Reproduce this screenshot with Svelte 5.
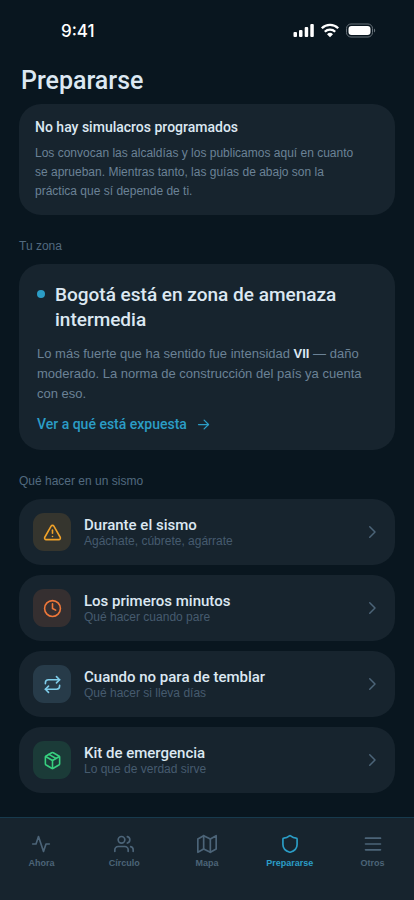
<script lang="ts">
  interface Guide {
    title: string;
    detail: string;
    icon: string;
    tone: string;
  }

  const icons: Record<string, string[]> = {
    alert: [
      'm21.73 18-8-14a2 2 0 0 0-3.48 0l-8 14A2 2 0 0 0 4 21h16a2 2 0 0 0 1.73-3',
      'M12 9v4',
      'M12 17h.01'
    ],
    clock: ['M12 2a10 10 0 1 0 0 20a10 10 0 1 0 0-20', 'M12 6v6l4 2'],
    repeat: ['m17 2 4 4-4 4', 'M3 11v-1a4 4 0 0 1 4-4h14', 'm7 22-4-4 4-4', 'M21 13v1a4 4 0 0 1-4 4H3'],
    box: [
      'M11 21.73a2 2 0 0 0 2 0l7-4A2 2 0 0 0 21 16V8a2 2 0 0 0-1-1.73l-7-4a2 2 0 0 0-2 0l-7 4A2 2 0 0 0 3 8v8a2 2 0 0 0 1 1.73z',
      'M12 22V12',
      'M3.29 7 12 12l8.71-5',
      'm7.5 4.27 9 5.15'
    ],
    activity: ['M22 12h-4l-3 9L9 3l-3 9H2'],
    users: [
      'M17 21v-2a4 4 0 0 0-4-4H5a4 4 0 0 0-4 4v2',
      'M9 3a4 4 0 1 0 0 8a4 4 0 1 0 0-8',
      'M23 21v-2a4 4 0 0 0-3-3.87',
      'M16 3.13a4 4 0 0 1 0 7.75'
    ],
    map: ['M1 6v16l7-4 8 4 7-4V2l-7 4-8-4-7 4z', 'M8 2v16', 'M16 6v16'],
    shield: [
      'M20.5 12.5c0 5-3.7 8-8.2 9.4a1 1 0 0 1-.6 0C7.2 20.500 3.500 17.500 3.500 12.500V6a1 1 0 0 1 1-1c2.500-.1 5-1.200 6.800-2.700a1.200 1.200 0 0 1 1.400 0C14.500 3.800 17 4.900 19.500 5a1 1 0 0 1 1 1z'
    ],
    menu: ['M3 5h18', 'M3 12h18', 'M3 19h18'],
    arrow: ['M4 12h16', 'm13 5 7 7-7 7'],
    chevron: ['m9 5 7 7-7 7']
  };

  const guides: Guide[] = [
    { title: 'Durante el sismo', detail: 'Agáchate, cúbrete, agárrate', icon: 'alert', tone: 'amber' },
    { title: 'Los primeros minutos', detail: 'Qué hacer cuando pare', icon: 'clock', tone: 'orange' },
    { title: 'Cuando no para de temblar', detail: 'Qué hacer si lleva días', icon: 'repeat', tone: 'sky' },
    { title: 'Kit de emergencia', detail: 'Lo que de verdad sirve', icon: 'box', tone: 'green' }
  ];

  const tabs = [
    { label: 'Ahora', icon: 'activity' },
    { label: 'Círculo', icon: 'users' },
    { label: 'Mapa', icon: 'map' },
    { label: 'Prepararse', icon: 'shield' },
    { label: 'Otros', icon: 'menu' }
  ];

  let active = $state('Prepararse');
</script>

{#snippet icon(name: string)}
  <svg class="icon" viewBox="0 0 24 24" aria-hidden="true">
    {#each icons[name] as d}
      <path {d} />
    {/each}
  </svg>
{/snippet}

<div class="app">
  <div class="status">
    <span class="time">9:41</span>
    <svg class="indicators" viewBox="0 0 83 16" width="83" height="16" aria-hidden="true">
      <g fill="#fff">
        <rect x="0.5" y="9" width="3.5" height="5" rx="1" />
        <rect x="6" y="7" width="3.5" height="7" rx="1" />
        <rect x="11.7" y="4" width="3.5" height="10" rx="1" />
        <rect x="17.3" y="1" width="3.5" height="13" rx="1" />
        <path d="M37 14.2l3-3a4.3 4.3 0 0 0-6 0z" />
        <rect x="55.5" y="3" width="22" height="9" rx="3" />
      </g>
      <g fill="none" stroke="#fff" stroke-width="2.3">
        <path d="M28.8 5.2a11.7 11.7 0 0 1 16.4 0" />
        <path d="M31.8 8.8a7.4 7.4 0 0 1 10.4 0" />
      </g>
      <rect x="53.5" y="1" width="26" height="13" rx="4.5" fill="none" stroke="#68727a" />
      <path d="M81 5.5c1.6.8 1.6 3.2 0 4z" fill="#68727a" />
    </svg>
  </div>

  <main>
    <h1>Prepararse</h1>

    <section class="card drills">
      <h2>No hay simulacros programados</h2>
      <p>
        Los convocan las alcaldías y los publicamos aquí en cuanto se aprueban. Mientras tanto, las
        guías de abajo son la práctica que sí depende de ti.
      </p>
    </section>

    <h2 class="label">Tu zona</h2>
    <section class="card zone">
      <div class="zone-title">
        <span class="dot"></span>
        <h3>Bogotá está en zona de amenaza intermedia</h3>
      </div>
      <p>
        Lo más fuerte que ha sentido fue intensidad <strong>VII</strong> — daño moderado. La norma de
        construcción del país ya cuenta con eso.
      </p>
      <a class="more" href="#zona">Ver a qué está expuesta {@render icon('arrow')}</a>
    </section>

    <h2 class="label">Qué hacer en un sismo</h2>
    <div class="guides">
      {#each guides as guide}
        <button class="card guide">
          <span class="tile {guide.tone}">{@render icon(guide.icon)}</span>
          <span class="text">
            <span class="title">{guide.title}</span>
            <span class="detail">{guide.detail}</span>
          </span>
          <span class="chevron">{@render icon('chevron')}</span>
        </button>
      {/each}
    </div>
  </main>

  <nav>
    {#each tabs as tab}
      <button class="tab" class:active={active === tab.label} onclick={() => (active = tab.label)}>
        {@render icon(tab.icon)}
        <span>{tab.label}</span>
      </button>
    {/each}
  </nav>
</div>

<style>
  :global(body) {
    margin: 0;
    background: #09161f;
  }

  .app {
    display: flex;
    flex-direction: column;
    min-height: 100vh;
    background: #09161f;
    color: #dce8f2;
    font-family: 'Liberation Sans', Arial, sans-serif;
  }

  h1,
  h2,
  h3,
  p {
    margin: 0;
  }

  h1,
  h2,
  h3,
  .more,
  .title {
    font-family: Roboto, sans-serif;
    font-weight: 500;
  }

  button {
    border: none;
    font-family: inherit;
    cursor: pointer;
  }

  .icon {
    display: block;
    width: 20px;
    height: 20px;
    flex-shrink: 0;
    fill: none;
    stroke: currentColor;
    stroke-width: 2;
    stroke-linecap: round;
    stroke-linejoin: round;
  }

  .status {
    display: flex;
    justify-content: space-between;
    align-items: center;
    padding: 20px 38px 0 61px;
    height: 22px;
    color: #fff;
  }

  .time {
    font-family: Inter, sans-serif;
    font-size: 17px;
    font-weight: 500;
  }

  main {
    flex: 1;
    padding: 0 19px 24px;
  }

  h1 {
    padding: 23px 2px 7px;
    font-size: 25px;
    line-height: 32px;
  }

  .card {
    border-radius: 22px;
    background: #17242e;
  }

  .drills {
    padding: 13px 28px 14px 16px;
  }

  .drills h2 {
    font-size: 14px;
    line-height: 20px;
  }

  .drills p {
    margin-top: 7px;
    font-size: 12px;
    line-height: 19px;
    color: #6b8296;
  }

  .label {
    padding: 23px 0 9px;
    font-family: inherit;
    font-size: 12px;
    font-weight: 400;
    line-height: 17px;
    color: #526a7f;
  }

  .zone {
    padding: 18px 18px 16px;
  }

  .zone-title {
    display: flex;
    gap: 10px;
  }

  .dot {
    flex-shrink: 0;
    width: 8px;
    height: 8px;
    margin-top: 8px;
    border-radius: 50%;
    background: #2b9dc6;
  }

  h3 {
    font-size: 19px;
    line-height: 25px;
  }

  .zone p {
    margin-top: 12px;
    font-size: 13px;
    line-height: 20px;
    color: #6b8296;
  }

  .zone strong {
    color: #dce8f2;
  }

  .more {
    display: flex;
    align-items: center;
    gap: 9px;
    margin-top: 10px;
    font-size: 14px;
    line-height: 20px;
    color: #2b9dc6;
    text-decoration: none;
  }

  .more .icon {
    width: 15px;
    height: 15px;
  }

  .guides {
    display: flex;
    flex-direction: column;
    gap: 10px;
  }

  .guide {
    display: flex;
    align-items: center;
    gap: 13px;
    padding: 14px;
    color: inherit;
    text-align: left;
  }

  .tile {
    display: grid;
    place-items: center;
    width: 38px;
    height: 38px;
    border-radius: 11px;
  }

  .tile .icon {
    width: 19px;
    height: 19px;
  }

  .amber {
    background: #35352e;
    color: #f0a229;
  }

  .orange {
    background: #352f30;
    color: #ef783a;
  }

  .sky {
    background: #273b49;
    color: #7fcdea;
  }

  .green {
    background: #1b3b38;
    color: #37d07f;
  }

  .text {
    display: flex;
    flex: 1;
    flex-direction: column;
  }

  .title {
    font-size: 15px;
    line-height: 18px;
  }

  .detail {
    font-size: 12px;
    line-height: 14px;
    color: #465b6e;
  }

  .chevron {
    color: #4c6478;
  }

  .chevron .icon {
    width: 18px;
    height: 18px;
  }

  nav {
    display: grid;
    grid-template-columns: repeat(5, 1fr);
    padding: 16px 0 31px;
    border-top: 1px solid #173a4d;
    background: #17242e;
  }

  .tab {
    display: flex;
    flex-direction: column;
    align-items: center;
    gap: 3px;
    padding: 0;
    background: none;
    color: #4c6478;
    font-size: 9px;
    font-weight: 700;
    line-height: 12px;
  }

  .tab.active {
    color: #2b9dc6;
  }
</style>
